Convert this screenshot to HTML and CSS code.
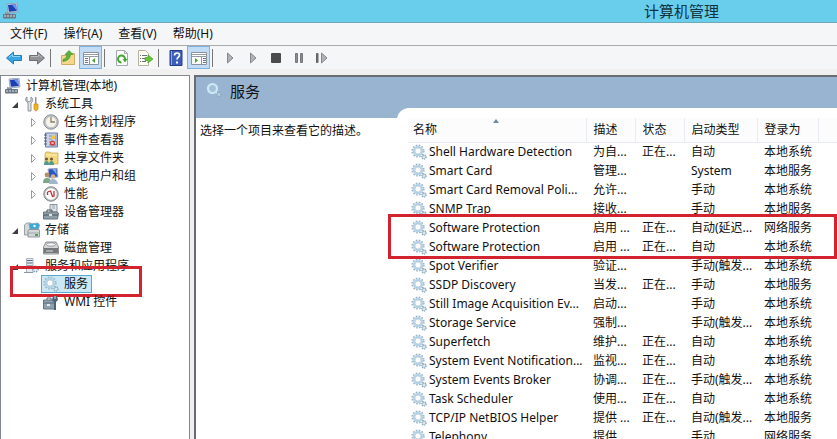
FILE: index.html
```html
<!DOCTYPE html>
<html lang="zh-CN">

<head>
    <meta charset="UTF-8" />
    <title>计算机管理</title>
    <link rel="stylesheet" href="styles.css">
</head>

<body>
    <!-- Icon set -->
    <svg class="hidden">
        <symbol id="i-computer" viewBox="0 0 16 16">
            <path d="M4 1l10-1 1 9-10 1z" fill="#cfd6e4" stroke="#8790a4" stroke-width=".7" />
            <path d="M5 2l8-.8.8 6.8-7.8.8z" fill="#1c3fb4" />
            <path d="M9 1.700l4-.4.800 6.500z" fill="#6d95ee" />
            <path d="M2 9l5 1v2l-5-1z" fill="#8d96a5" />
            <rect x="0" y="11" width="13" height="4.500" rx="1" fill="#697684" />
            <path d="M2 12v2m3-2v2m3-2v2m3-2v2" stroke="#dfe5ea" />
        </symbol>
        <symbol id="i-tools" viewBox="0 0 16 16">
            <path d="M3 1v4l2 1 2-1V1c2 1 2.500 4 0 6v8H4V7C1 5 1 2 3 1z" fill="#e0e3e6" stroke="#777d82" stroke-width=".8" />
            <path d="M11 1h1.500v7H11z" fill="#8b9299" />
            <path d="M10 8h4v5q-2 4-4 0z" fill="#f0b21d" stroke="#c58a0c" stroke-width=".7" />
        </symbol>
        <symbol id="i-clock" viewBox="0 0 16 16">
            <circle cx="8" cy="8" r="7.200" fill="#c7cbd0" stroke="#858a90" />
            <circle cx="8" cy="8" r="5.600" fill="#f6f3e8" stroke="#a7acb1" stroke-width=".6" />
            <path d="M8 3v5h4" fill="none" stroke="#8d7f63" stroke-width="1.300" />
        </symbol>
        <symbol id="i-event" viewBox="0 0 16 16">
            <path d="M2.500 1h12v14h-12z" fill="#c9d2ea" stroke="#6879a3" />
            <path d="M1 3h3M1 6h3M1 9h3M1 12h3" stroke="#555f78" />
            <path d="M6 4h3m-3 3h3m-3 3h3m-3 3h7" stroke="#7e8bad" />
            <path d="M10.500 2l3 5h-6z" fill="#f2c43a" />
            <circle cx="9.500" cy="11" r="2.600" fill="#cc3c37" />
            <path d="M8.500 10l2 2m0-2l-2 2" stroke="#fff" stroke-width=".8" />
            <path d="M13 2v12" stroke="#8797bd" />
        </symbol>
        <symbol id="i-share" viewBox="0 0 16 16">
            <path d="M2 4l1-2h4l1 1h7v11H2z" fill="#f1d97f" stroke="#c9aa54" stroke-width=".8" />
            <path d="M3 5h11" stroke="#fff0b2" />
            <circle cx="3.500" cy="9" r="1.600" fill="#6e5a3a" />
            <circle cx="8.500" cy="9" r="1.600" fill="#6e5a3a" />
            <path d="M1 15q0-4 2.500-4T6 15zm5 0q0-4 2.500-4t2.500 4z" fill="#4f9b94" />
        </symbol>
        <symbol id="i-users" viewBox="0 0 16 16">
            <path d="M5 1l9-1 1 9-9 1z" fill="#2c58bd" stroke="#a7b2c6" />
            <path d="M9 1l4-.4.800 6z" fill="#7fa3ee" />
            <circle cx="4" cy="7" r="2.400" fill="#b58f66" />
            <circle cx="10" cy="8.500" r="2.300" fill="#d3b08d" />
            <path d="M0 15q0-5 4-5t4 5z" fill="#7fa587" />
            <path d="M6 16q0-5 4-5t5 5z" fill="#9fb6cc" />
        </symbol>
        <symbol id="i-perf" viewBox="0 0 16 16">
            <circle cx="8" cy="8" r="7.200" fill="#b9bdc2" stroke="#7f8489" />
            <circle cx="8" cy="8" r="5.700" fill="#fff" />
            <path d="M4.500 6v3m0-3l3-1 2 5.500 1.500-.5V5" fill="none" stroke="#bf2f34" stroke-width="1.300" />
        </symbol>
        <symbol id="i-device" viewBox="0 0 16 16">
            <path d="M7 .5h7V8H7z" fill="#dfe4e8" stroke="#8c959c" />
            <path d="M9 2h3M9 4h3" stroke="#98a3ab" />
            <path d="M.5 8h13l2 1-1 6H.5z" fill="#8f9fa8" stroke="#66747c" />
            <path d="M4 8V6h5v2M1 11h14" fill="none" stroke="#4a555d" />
            <path d="M6 10h3v2H6z" fill="#dce4e8" />
        </symbol>
        <symbol id="i-storage" viewBox="0 0 16 16">
            <path d="M.5 3l2-2H7v12H.5z" fill="#d4d8db" stroke="#878d92" stroke-width=".8" />
            <path d="M5 2l9-1 1.500 2-1 4H6z" fill="#39a9d6" stroke="#7fa5b7" stroke-width=".8" />
            <circle cx="10.500" cy="4" r="1.300" fill="#e5f6fc" />
            <path d="M4 9l1-1.500h10l.5 1.500v6H4z" fill="#d3d7d9" stroke="#7d858a" stroke-width=".8" />
            <path d="M4 11h11" stroke="#929a9f" stroke-width=".8" />
            <path d="M11 13h3" stroke="#39a94a" stroke-width="2" />
        </symbol>
        <symbol id="i-disk" viewBox="0 0 16 16">
            <path d="M3 2h10l2.500 5v7H.5V7z" fill="#d5d7d8" stroke="#77797b" stroke-width=".8" />
            <ellipse cx="8" cy="4.500" rx="4.500" ry="1.800" fill="#f2f2f2" stroke="#848789" stroke-width=".8" />
            <path d="M1 8h14v5H1z" fill="#74787b" />
            <path d="M3 11h7" stroke="#dcdedf" />
        </symbol>
        <symbol id="i-apps" viewBox="0 0 16 16">
            <path d="M2.500.5H9v14H2.500z" fill="#e6eaee" stroke="#98a2ad" stroke-width=".8" />
            <path d="M3 2.500h5.500M3 5h5.500M3 8h5.500" stroke="#536b87" />
            <circle cx="11.500" cy="11" r="2.700" fill="#e6eef3" stroke="#8da3b2" stroke-width="1.500" stroke-dasharray="1.500 .8" />
            <path d="M0 14.500h9" stroke="#8a95a0" />
        </symbol>
        <symbol id="i-gear" viewBox="0 0 16 16">
            <circle cx="7" cy="7" r="5.800" fill="none" stroke="#9db3c2" stroke-width="1.600" stroke-dasharray="1.600 1.440" />
            <circle cx="7" cy="7" r="4.300" fill="none" stroke="#b5d3e6" stroke-width="2" />
            <circle cx="7" cy="7" r="3.100" fill="#fff" stroke="#94b0c2" stroke-width=".6" />
            <circle cx="13" cy="13" r="2.100" fill="#c2d9e7" stroke="#8ba6b8" stroke-width="1.300" stroke-dasharray="1.200 .7" />
            <circle cx="13" cy="13" r=".7" fill="#fff" />
        </symbol>
        <symbol id="i-wmi" viewBox="0 0 16 16">
            <path d="M.5 6H12v9H.5z" fill="#8ea1b1" stroke="#65737f" />
            <path d="M4 6V4h4v2M1 9h10" fill="none" stroke="#586b7b" />
            <path d="M10 2h4l1 4-2 2v8h-2V8L9 6z" fill="#4d6076" />
            <path d="M12 2v3" stroke="#d5dfe7" />
            <path d="M4 10h3v2H4z" fill="#e3e9ed" />
        </symbol>
        <symbol id="i-back" viewBox="0 0 16 16">
            <path d="M.5 8l7-6v3.500h8v5h-8V14z" fill="#35a5e5" stroke="#287db5" />
            <path d="M3 7.500l3.500-3v2H14" fill="none" stroke="#8ed3f6" />
        </symbol>
        <symbol id="i-forward" viewBox="0 0 16 16">
            <path d="M15.500 8l-7-6v3.500h-8v5h8V14z" fill="#909396" stroke="#6d7073" />
            <path d="M2 6.500h7.500v-2l3.500 3" fill="none" stroke="#b8babc" />
        </symbol>
        <symbol id="i-up" viewBox="0 0 16 16">
            <path d="M1.500 5.500H7l1-2h6.500v11h-13z" fill="#f4d68c" stroke="#cfac60" />
            <path d="M3 9.500q4-.5 4-5H5L9 .5l4 4h-2.500q-.5 6-7.500 7z" fill="#59b33b" stroke="#398b22" stroke-width=".6" />
        </symbol>
        <symbol id="i-tree" viewBox="0 0 16 16">
            <path d="M.5 2.500h15v12H.5z" fill="#fff" stroke="#8b949e" />
            <path d="M1 4.500h14M1 6.500h14" stroke="#959ea8" />
            <path d="M6.500 7v7" stroke="#8b949e" />
            <path d="M2 8.500h3m-3 2h3m-3 2h3" stroke="#6a7580" />
            <path d="M12 8v5L9 10.500z" fill="#42a52e" />
        </symbol>
        <symbol id="i-pane" viewBox="0 0 16 16">
            <path d="M.5 2.500h15v12H.5z" fill="#fff" stroke="#8b949e" />
            <path d="M1 4.500h14M1 6.500h14" stroke="#959ea8" />
            <path d="M10.500 7v7" stroke="#8b949e" />
            <path d="M12 8.500h3m-3 2h3m-3 2h3" stroke="#6a7580" />
            <path d="M4 8v5l3-2.500z" fill="#42a52e" />
        </symbol>
        <symbol id="i-refresh" viewBox="0 0 16 16">
            <path d="M2.500.5h8l3 3v12h-11z" fill="#fff" stroke="#a5a9ad" />
            <path d="M10.500.5v3h3" fill="none" stroke="#a5a9ad" />
            <path d="M7.500 12.500A3.500 3.500 0 1 1 11 9" fill="none" stroke="#43a82f" stroke-width="2" />
            <path d="M8.500 9h5L11 12.500z" fill="#43a82f" />
        </symbol>
        <symbol id="i-export" viewBox="0 0 16 16">
            <path d="M1.500.5h7l3 3v12h-10z" fill="#fffdf0" stroke="#b5b39d" />
            <path d="M3 5.500h1m1 0h5M3 8.500h1m1 0h3M3 11.500h1m1 0h4" stroke="#667085" />
            <path d="M8 7.500h3V5l5 4-5 4v-2.500H8z" fill="#67c33a" stroke="#3b951d" stroke-width=".6" />
        </symbol>
        <symbol id="i-help" viewBox="0 0 16 16">
            <path d="M2 .5h12v15H2z" fill="#3d5fba" stroke="#273d85" />
            <path d="M3.500 1v14" stroke="#8da7e7" />
            <path d="M6.500 5.500q0-2.500 2.500-2.500t2.500 2.200c0 2-2.500 2-2.500 4.300" fill="none" stroke="#fff" stroke-width="1.700" />
            <path d="M8 11.500h2v2H8z" fill="#fff" />
        </symbol>
        <symbol id="i-play" viewBox="0 0 16 16">
            <path d="M5.500 3l5.500 5-5.500 5z" fill="#b0b3b5" stroke="#85888a" />
        </symbol>
        <symbol id="i-stop" viewBox="0 0 16 16">
            <rect x="3" y="3" width="10" height="10" rx="1" fill="#4a4b4d" />
        </symbol>
        <symbol id="i-pause" viewBox="0 0 16 16">
            <path d="M4.500 3.500h2v9h-2zm5 0h2v9h-2z" fill="#8b8e91" stroke="#75787a" />
        </symbol>
        <symbol id="i-restart" viewBox="0 0 16 16">
            <path d="M2.500 3.500h1.500v9H2.500z" fill="#777" stroke="#606366" />
            <path d="M7.500 3l5.500 5-5.500 5z" fill="#b0b3b5" stroke="#85888a" />
        </symbol>
        <symbol id="i-search" viewBox="0 0 16 16">
            <circle cx="6.500" cy="6.500" r="4.500" fill="#a3bfd9" stroke="#cfe8f5" stroke-width="2.200" />
            <path d="M9.500 10l2 2" stroke="#c5dbe8" stroke-width="1.500" />
            <circle cx="13" cy="12.500" r="2" fill="#b7d0e2" stroke="#7da1bf" stroke-width="1.200" stroke-dasharray="1 .7" />
        </symbol>
        <symbol id="i-closed" viewBox="0 0 10 10">
            <path d="M2.500 1.500L6.500 5.500l-4 4z" fill="#fff" stroke="#9b9b9b" />
        </symbol>
        <symbol id="i-open" viewBox="0 0 10 10">
            <path d="M8 3v6H2z" fill="#3d3d3d" />
        </symbol>
    </svg>

    <header class="titlebar">
        <svg class="icon"><use href="#i-computer" /></svg>
        <h1>计算机管理</h1>
    </header>

    <nav class="menubar">
        <button>文件(F)</button>
        <button>操作(A)</button>
        <button>查看(V)</button>
        <button>帮助(H)</button>
    </nav>

    <div class="toolbar">
        <button aria-label="后退"><svg class="icon"><use href="#i-back" /></svg></button>
        <button aria-label="前进"><svg class="icon"><use href="#i-forward" /></svg></button>
        <span class="sep"></span>
        <button aria-label="向上"><svg class="icon"><use href="#i-up" /></svg></button>
        <button class="active" aria-label="控制台树"><svg class="icon"><use href="#i-tree" /></svg></button>
        <span class="sep"></span>
        <button aria-label="刷新"><svg class="icon"><use href="#i-refresh" /></svg></button>
        <button aria-label="导出列表"><svg class="icon"><use href="#i-export" /></svg></button>
        <span class="sep"></span>
        <button aria-label="帮助"><svg class="icon"><use href="#i-help" /></svg></button>
        <button class="active" aria-label="操作窗格"><svg class="icon"><use href="#i-pane" /></svg></button>
        <span class="sep"></span>
        <button aria-label="启动"><svg class="icon"><use href="#i-play" /></svg></button>
        <button aria-label="继续"><svg class="icon"><use href="#i-play" /></svg></button>
        <button aria-label="停止"><svg class="icon"><use href="#i-stop" /></svg></button>
        <button aria-label="暂停"><svg class="icon"><use href="#i-pause" /></svg></button>
        <button aria-label="重新启动"><svg class="icon"><use href="#i-restart" /></svg></button>
    </div>

    <main class="workspace">
        <ul class="tree" id="tree">
            <!-- Filled by JS -->
        </ul>

        <section class="pane">
            <header class="banner">
                <svg class="icon"><use href="#i-search" /></svg>
                <h2>服务</h2>
            </header>
            <div class="content">
                <p class="description">选择一个项目来查看它的描述。</p>
                <div class="list">
                    <table>
                        <colgroup>
                            <col class="col-name">
                            <col class="col-desc">
                            <col class="col-state">
                            <col class="col-type">
                            <col class="col-logon">
                            <col>
                        </colgroup>
                        <thead>
                            <tr>
                                <th class="sorted">名称</th>
                                <th>描述</th>
                                <th>状态</th>
                                <th>启动类型</th>
                                <th>登录为</th>
                                <th></th>
                            </tr>
                        </thead>
                        <tbody id="services">
                            <!-- Filled by JS -->
                        </tbody>
                    </table>
                    <div class="mark mark-rows"></div>
                </div>
            </div>
        </section>
    </main>

    <script>
        // level, icon, label, arrow
        const nodes = [
            [0, "computer", "计算机管理(本地)", ""],
            [1, "tools", "系统工具", "open"],
            [2, "clock", "任务计划程序", "closed"],
            [2, "event", "事件查看器", "closed"],
            [2, "share", "共享文件夹", "closed"],
            [2, "users", "本地用户和组", "closed"],
            [2, "perf", "性能", "closed"],
            [2, "device", "设备管理器", ""],
            [1, "storage", "存储", "open"],
            [2, "disk", "磁盘管理", ""],
            [1, "apps", "服务和应用程序", "open"],
            [2, "gear", "服务", ""],
            [2, "wmi", "WMI 控件", ""],
        ];

        // name, description, state, startup type, log on as
        const services = [
            ["Shell Hardware Detection", "为自...", "正在...", "自动", "本地系统"],
            ["Smart Card", "管理...", "", "System", "本地服务"],
            ["Smart Card Removal Poli...", "允许...", "", "手动", "本地系统"],
            ["SNMP Trap", "接收...", "", "手动", "本地服务"],
            ["Software Protection", "启用 ...", "正在...", "自动(延迟...", "网络服务"],
            ["Software Protection", "启用 ...", "正在...", "自动", "本地系统"],
            ["Spot Verifier", "验证...", "", "手动(触发...", "本地系统"],
            ["SSDP Discovery", "当发...", "正在...", "手动", "本地服务"],
            ["Still Image Acquisition Ev...", "启动...", "", "手动", "本地系统"],
            ["Storage Service", "强制...", "", "手动(触发...", "本地系统"],
            ["Superfetch", "维护...", "正在...", "自动", "本地系统"],
            ["System Event Notification...", "监视...", "正在...", "自动", "本地系统"],
            ["System Events Broker", "协调...", "正在...", "手动(触发...", "本地系统"],
            ["Task Scheduler", "使用...", "正在...", "自动", "本地系统"],
            ["TCP/IP NetBIOS Helper", "提供 ...", "正在...", "自动(触发...", "本地服务"],
            ["Telephony", "提供...", "", "手动", "网络服务"],
        ];

        const icon = (name, cls = "icon") => `<svg class="${cls}"><use href="#i-${name}" /></svg>`;

        for (const [level, name, label, arrow] of nodes) {
            const item = document.createElement("li");
            const selected = label === "服务";
            item.className = `level-${level}`;
            item.innerHTML = `
                <span class="arrow">${arrow ? icon(arrow, "arrow-icon") : ""}</span>
                <a href="#" class="node${selected ? " selected" : ""}">${icon(name)}${label}</a>
                ${selected ? '<span class="mark mark-node"></span>' : ""}
            `;
            document.getElementById("tree").appendChild(item);
        }

        for (const [name, ...cells] of services) {
            const row = document.createElement("tr");
            row.innerHTML = `
                <td><div class="service">${icon("gear")}${name}</div></td>
                ${cells.map((cell) => `<td>${cell}</td>`).join("")}
                <td></td>
            `;
            document.getElementById("services").appendChild(row);
        }
    </script>
</body>

</html>
```
FILE: styles.css
```css
* {
    box-sizing: border-box;
}

body {
    display: flex;
    flex-direction: column;
    height: 100vh;
    margin: 0;
    overflow: hidden;
    background-color: #f0f0f0;
    color: #111;
    font-family: "Noto Sans", "Noto Sans CJK SC", sans-serif;
    font-size: 12px;
    line-height: 18px;
}

h1,
h2,
p,
ul {
    margin: 0;
    padding: 0;
    font-weight: normal;
}

button {
    padding: 0;
    border: 0;
    background: none;
    color: inherit;
    font: inherit;
}

.hidden {
    display: none;
}

.icon {
    flex: none;
    width: 16px;
    height: 16px;
}

/* Window chrome */
.titlebar {
    display: flex;
    align-items: center;
    flex: none;
    height: 23px;
    padding: 0 118px 0 3px;
    background-color: #69cdec;
    border-bottom: 1px solid #6fa9b8;
}

.titlebar h1 {
    margin-left: auto;
    color: #12333d;
    font-size: 15px;
}

.menubar {
    display: flex;
    flex: none;
    gap: 16px;
    height: 23px;
    padding: 0 10px;
    background-color: #f5f6f7;
    border-bottom: 1px solid #a9abad;
}

.toolbar {
    display: flex;
    align-items: center;
    flex: none;
    height: 23px;
    padding-left: 2px;
    background-color: #f5f6f7;
}

.toolbar button {
    display: flex;
    align-items: center;
    justify-content: center;
    width: 23px;
    height: 23px;
}

.toolbar .active {
    background-color: #c3dcf5;
    border: 1px solid #7fb1e0;
}

.sep {
    width: 8px;
    height: 18px;
    padding-left: 2px;
}

.sep::before {
    content: "";
    display: block;
    width: 1px;
    height: 100%;
    background-color: #777;
}

.workspace {
    display: flex;
    flex: 1;
    gap: 4px;
    min-height: 0;
    padding-top: 6px;
}

/* Console tree */
.tree {
    flex: none;
    width: 190px;
    padding-top: 1px;
    background-color: #fff;
    border: 1px solid #828790;
    border-bottom: 0;
    list-style: none;
}

.tree li {
    display: flex;
    align-items: center;
    position: relative;
    height: 18px;
}

.level-1 {
    padding-left: 7px;
}

.level-2 {
    padding-left: 26px;
}

.arrow {
    display: flex;
    justify-content: center;
    width: 14px;
}

.level-0 .arrow {
    width: 2px;
}

.arrow-icon {
    width: 10px;
    height: 10px;
}

.node {
    display: flex;
    align-items: center;
    gap: 5px;
    height: 18px;
    padding: 0 3px 0 1px;
    border: 1px solid transparent;
    color: inherit;
    text-decoration: none;
    white-space: nowrap;
}

.selected {
    background-color: #cbe8f6;
    border-color: #5aa9cf;
}

/* Services pane */
.pane {
    display: flex;
    flex-direction: column;
    flex: 1;
    min-width: 0;
    background-color: #fff;
    border-top: 2px solid #696d73;
    border-left: 2px solid #696d73;
}

.banner {
    display: flex;
    flex: none;
    gap: 8px;
    height: 41px;
    padding: 5px 10px;
    background-color: #99b4d1;
}

.banner h2 {
    font-size: 15px;
}

.content {
    display: flex;
    flex: 1;
    min-height: 0;
}

.description {
    flex: none;
    width: 201px;
    padding: 4px;
}

.list {
    position: relative;
    flex: 1;
    min-width: 0;
    margin-top: -10px;
    padding: 10px 0 0 11px;
    background-color: #fff;
    border-top-left-radius: 12px;
}

table {
    width: 100%;
    border-collapse: collapse;
    table-layout: fixed;
}

.col-name {
    width: 178px;
}

.col-desc {
    width: 49px;
}

.col-state {
    width: 49px;
}

.col-type {
    width: 73px;
}

.col-logon {
    width: 61px;
}

th,
td {
    height: 19px;
    padding: 0 0 0 7px;
    font-weight: normal;
    text-align: left;
    white-space: nowrap;
}

th {
    height: 24px;
    background-color: #fcfcfd;
    border-right: 1px solid #e8ecf1;
    border-bottom: 1px solid #e8ecf1;
}

th:first-child {
    padding-left: 5px;
}

th:last-child {
    border-right: 0;
}

td:first-child {
    padding-left: 3px;
}

.sorted {
    position: relative;
}

.sorted::after {
    content: "";
    position: absolute;
    top: 1px;
    left: 48%;
    border: 3px solid transparent;
    border-top: 0;
    border-bottom: 4px solid #6e8b9c;
}

.service {
    display: flex;
    align-items: center;
    gap: 2px;
}

/* Red highlight frames */
.mark {
    position: absolute;
    border: 3px solid #d2232e;
    pointer-events: none;
}

.mark-node {
    top: -9px;
    left: 9px;
    width: 132px;
    height: 31px;
}

.mark-rows {
    top: 106px;
    right: 0;
    left: -9px;
    height: 45px;
}
```
